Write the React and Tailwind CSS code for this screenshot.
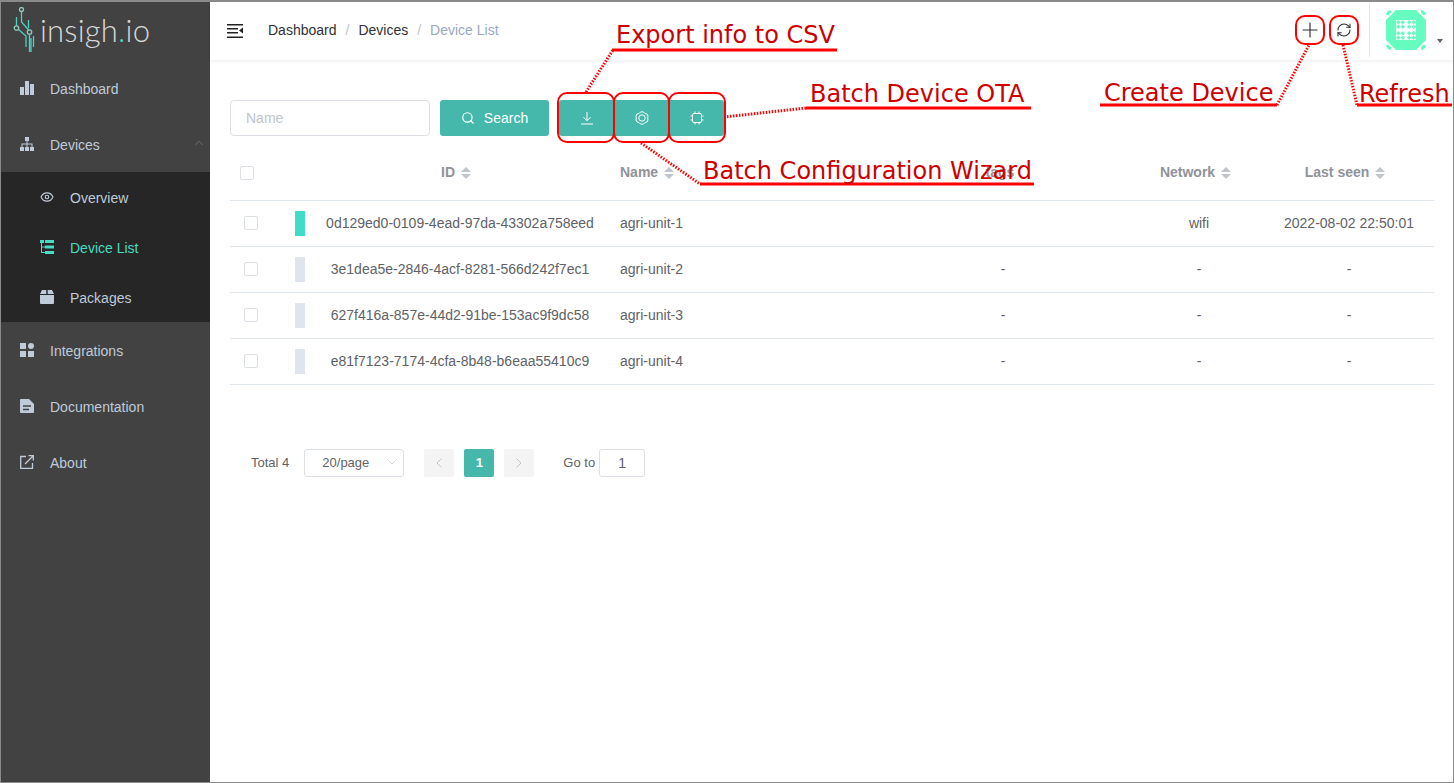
import { Search, Plus, RefreshCw, ChevronUp, ChevronDown, ChevronLeft, ChevronRight, Eye } from 'lucide-react';

const rows = [
  { id: '0d129ed0-0109-4ead-97da-43302a758eed', name: 'agri-unit-1', tags: '', network: 'wifi', seen: '2022-08-02 22:50:01', on: true },
  { id: '3e1dea5e-2846-4acf-8281-566d242f7ec1', name: 'agri-unit-2', tags: '-', network: '-', seen: '-' },
  { id: '627f416a-857e-44d2-91be-153ac9f9dc58', name: 'agri-unit-3', tags: '-', network: '-', seen: '-' },
  { id: 'e81f7123-7174-4cfa-8b48-b6eaa55410c9', name: 'agri-unit-4', tags: '-', network: '-', seen: '-' },
];

const gridCols = 'grid grid-cols-[50px_40px_280px_272px_262px_130px_170px] items-center';

const Bars = () => (
  <svg width="14" height="14" viewBox="0 0 14 14" fill="currentColor"><rect x="0" y="6" width="4" height="8" /><rect x="5" y="0" width="4" height="14" /><rect x="10" y="3" width="4" height="11" /></svg>
);
const Tree = () => (
  <svg width="14" height="14" viewBox="0 0 14 14" fill="currentColor"><rect x="5" y="0" width="4" height="4" /><rect x="0" y="10" width="4" height="4" /><rect x="5" y="10" width="4" height="4" /><rect x="10" y="10" width="4" height="4" /><path d="M6.5 4h1v2.5h5V10h-1V7.5h-4V10h-1V7.5h-4V10h-1V6.5h5z" /></svg>
);
const Grid4 = () => (
  <svg width="14" height="14" viewBox="0 0 14 14" fill="currentColor"><rect x="0" y="0" width="6" height="6" /><circle cx="11" cy="3" r="3" /><rect x="0" y="8" width="6" height="6" /><rect x="8" y="8" width="6" height="6" /></svg>
);
const Doc = () => (
  <svg width="14" height="14" viewBox="0 0 14 14"><path fill="currentColor" d="M1 0h8l5 5v8a1 1 0 0 1-1 1H1a1 1 0 0 1-1-1V1a1 1 0 0 1 1-1z" /><path stroke="#424242" strokeWidth="1.4" d="M3 7h8M3 10.500h6" /></svg>
);
const ListTree = () => (
  <svg width="14" height="14" viewBox="0 0 14 14" fill="currentColor"><rect x="0" y="0" width="4" height="3" /><rect x="5" y="0" width="9" height="3" /><rect x="5" y="5.500" width="9" height="3" /><rect x="5" y="11" width="9" height="3" /><path d="M1 3h1v3.500h3v1H2v4.500h3v1H1z" /></svg>
);
const Box = () => (
  <svg width="14" height="14" viewBox="0 0 14 14" fill="currentColor"><path d="M2 0H6.300v4H0zM7.700 0H12L14 4H7.700zM0 5h14V13a1 1 0 0 1-1 1H1a1 1 0 0 1-1-1z" /></svg>
);
const AboutIcon = () => (
  <svg width="14" height="14" viewBox="0 0 14 14" fill="none" stroke="currentColor" strokeWidth="1.300"><path d="M6 1.500H.7v11.800h11.800V8" /><path d="M5 9L13 1M8.500.7h4.800v4.800" /></svg>
);

const DownloadIcon = () => (
  <svg width="14" height="14" viewBox="0 0 14 14" fill="none" stroke="currentColor" strokeWidth="1"><path d="M7 1v8.500M3.500 6.200L7 9.700l3.500-3.500M1 13h12" /></svg>
);
const GearIcon = () => (
  <svg width="14" height="14" viewBox="0 0 14 14" fill="none" stroke="currentColor" strokeWidth="1">
    <path d="M5.500 1 7 .8 8.500 1 10 2.500l2 .5 1 2-.3 2 .3 2-1 2-2 .5L8.500 13 7 13.200 5.500 13 4 11.500l-2-.5-1-2 .3-2-.3-2 1-2 2-.5z" />
    <circle cx="7" cy="7" r="3.200" />
  </svg>
);
const ChipIcon = () => (
  <svg width="14" height="14" viewBox="0 0 14 14" fill="none" stroke="currentColor" strokeWidth="1">
    <rect x="2.500" y="2.500" width="9" height="9" rx="1.500" />
    <path d="M5 .5v2M9 .5v2M5 11.500v2M9 11.500v2M.5 5h2M.5 9h2M11.500 5h2M11.500 9h2" />
  </svg>
);

const Logo = () => (
  <svg width="26" height="48" viewBox="0 0 26 48" fill="none" stroke="#4fd1bd" strokeWidth="1.300">
    <path d="M8.500 4v11l8 9v21M3.500 10v9M5 22l8 7v11M15.500 13v8M20.500 29v11M18 31v14" />
    <circle cx="8.500" cy="2.500" r="2" stroke="#8ec9bd" />
    <circle cx="3.500" cy="21" r="2.200" stroke="#8ec9bd" fill="#424242" />
    <circle cx="16.500" cy="25" r="2.200" stroke="#8ec9bd" fill="#424242" />
  </svg>
);

const Avatar = () => (
  <svg width="40" height="40" viewBox="0 0 40 40">
    <path fill="#66fcc0" d="M10 0H30L40 10V30L30 40H10L0 30V10z" />
    <path fill="none" stroke="#66fcc0" strokeWidth="3" d="M1.500 5Q2 2 5 1.500M35 1.500Q38 2 38.500 5M1.500 35Q2 38 5 38.500M35 38.500Q38 38 38.500 35" />
    <rect x="10" y="10" width="20" height="20" fill="#fff" />
    <g fill="#66fcc0">
      {[12.300, 16.800, 23.200, 27.700].flatMap((x) => [12.300, 16.800, 23.200, 27.700].map((y) => <path key={`${x}-${y}`} d={`M${x - 2.300} ${y}L${x} ${y - 2.300}L${x + 2.300} ${y}L${x} ${y + 2.300}z`} />))}
    </g>
  </svg>
);

const SortCaret = () => (
  <span className="inline-flex flex-col gap-[2px] ml-[6px] align-middle">
    <span className="w-0 h-0 border-x-[5px] border-x-transparent border-b-[5px] border-b-[#c0c4cc]" />
    <span className="w-0 h-0 border-x-[5px] border-x-transparent border-t-[5px] border-t-[#c0c4cc]" />
  </span>
);

const Checkbox = () => <span className="block w-[14px] h-[14px] border border-[#dcdfe6] rounded-[2px] bg-white" />;

const NavItem = ({ icon, label, right }) => (
  <div className="h-[56px] flex items-center pl-[19px] text-[#bfcbd9] text-sm relative">
    <span className="w-[14px] mr-[17px] flex justify-center">{icon}</span>
    <span className="-ml-px pt-[2px]">{label}</span>
    {right}
  </div>
);

const SubItem = ({ icon, label, active }) => (
  <div className={`h-[50px] flex items-center pl-[39px] text-sm ${active ? 'text-[#49dbc3]' : 'text-[#bfcbd9]'}`}>
    <span className="w-[14px] mr-[16px] flex justify-center">{icon}</span>
    <span className="pt-[2px]">{label}</span>
  </div>
);

const Sidebar = () => (
  <aside className="w-[209px] shrink-0 bg-[#424242] flex flex-col">
    <div className="h-[58px] flex items-center pl-[12px]">
      <Logo />
      <span className="ml-[1px] mb-[2px] text-[31px] font-light tracking-[0.2px] text-[#d8d8d8] font-['Lato',sans-serif] leading-none">insigh<span className="text-[#4fd1bd]">.</span>io</span>
    </div>
    <NavItem icon={<Bars />} label="Dashboard" />
    <NavItem icon={<Tree />} label="Devices" right={<ChevronUp size={14} strokeWidth={1} className="absolute right-[4px] top-[20px] text-[#8a8f98]" />} />
    <div className="bg-[#262626]">
      <SubItem icon={<Eye size={14} />} label="Overview" />
      <SubItem icon={<ListTree />} label="Device List" active />
      <SubItem icon={<Box />} label="Packages" />
    </div>
    <NavItem icon={<Grid4 />} label="Integrations" />
    <NavItem icon={<Doc />} label="Documentation" />
    <NavItem icon={<AboutIcon />} label="About" />
  </aside>
);

const Header = () => (
  <header className="h-[58px] pb-[2px] flex items-center shadow-[0_1px_4px_rgba(0,21,41,0.08)] relative">
    <svg className="ml-[17px] text-[#222] mt-[1px]" width="17" height="14" viewBox="0 0 17 14" fill="currentColor">
      <path d="M0 0h16v1.500H0zM0 4h11v1.500H0zM0 8h11v1.500H0zM0 12.500h16V14H0z" />
      <path d="M16 3.500v6l-4-3z" />
    </svg>
    <nav className="ml-[24px] text-sm flex items-center">
      <span className="text-[#303133]">Dashboard</span>
      <span className="mx-[9px] text-[#c0c4cc]">/</span>
      <span className="text-[#303133]">Devices</span>
      <span className="mx-[9px] text-[#c0c4cc]">/</span>
      <span className="text-[#97a8be]">Device List</span>
    </nav>
    <div className="ml-auto flex items-center h-full -mb-[2px] pb-[2px]">
      <Plus size={24} strokeWidth={1.200} className="text-[#303133] mr-[14px]" />
      <RefreshCw size={16} strokeWidth={1.600} className="text-[#303133] mr-[17px]" />
      <div className="h-full border-l border-[#e6e6e6] pl-[16px] pr-[10px] flex items-center relative">
        <Avatar />
        <span className="ml-[11px] mt-[22px] w-0 h-0 border-x-[3.500px] border-x-transparent border-t-[4px] border-t-[#606266]" />
      </div>
    </div>
  </header>
);

const Toolbar = () => (
  <div className="flex items-center">
    <div className="w-[200px] h-[36px] border border-[#dcdfe6] rounded-[4px] px-[15px] flex items-center text-sm text-[#c0c4cc]">Name</div>
    <button className="ml-[10px] w-[109px] h-[36px] bg-[#46b8ab] rounded-[3px] text-white text-sm flex items-center justify-center">
      <Search size={14} className="mr-[9px]" />Search
    </button>
    <div className="ml-[10px] flex h-[36px] bg-[#46b8ab] rounded-[3px] text-white">
      <span className="w-[55px] flex items-center justify-center"><DownloadIcon /></span>
      <span className="w-[55px] flex items-center justify-center"><GearIcon /></span>
      <span className="w-[55px] flex items-center justify-center"><ChipIcon /></span>
    </div>
  </div>
);

const DeviceTable = () => (
  <div className="mt-[14px] text-sm text-[#606266]">
    <div className={`${gridCols} h-[51px] border-b border-[#dfe6ec] font-bold text-[#909399]`}>
      <span className="pl-[10px] pb-[5px]"><Checkbox /></span>
      <span />
      <span className="text-center pr-[8px] pb-[7px]">ID<SortCaret /></span>
      <span className="pl-[20px] pb-[7px]">Name<SortCaret /></span>
      <span className="text-center pr-[6px] pb-[7px]">tags</span>
      <span className="text-center pr-[7px] pb-[7px]">Network<SortCaret /></span>
      <span className="text-center pr-[8px] pb-[7px]">Last seen<SortCaret /></span>
    </div>
    {rows.map((r) => (
      <div key={r.id} className={`${gridCols} h-[46px] border-b border-[#dfe6ec]`}>
        <span className="pl-[14px] pb-[2px]"><Checkbox /></span>
        <span className={`ml-[15px] w-[10px] h-[25px] ${r.on ? 'bg-[#40dcc8]' : 'bg-[#dfe4ed]'}`} />
        <span className="text-center pb-[2px]">{r.id}</span>
        <span className="pl-[20px] pb-[2px]">{r.name}</span>
        <span className="text-center pb-[2px]">{r.tags}</span>
        <span className="text-center pb-[2px]">{r.network}</span>
        <span className="text-center pb-[2px]">{r.seen}</span>
      </div>
    ))}
  </div>
);

const Pager = () => (
  <div className="mt-[64px] ml-[21px] flex items-center text-[13px] text-[#606266]">
    <span>Total 4</span>
    <div className="ml-[15px] w-[100px] h-[28px] border border-[#dcdfe6] rounded-[3px] flex items-center pl-[17px] relative">
      20/page
      <ChevronDown size={16} strokeWidth={1} className="absolute right-[3px] top-[4px] text-[#c0c4cc]" />
    </div>
    <span className="ml-[20px] w-[30px] h-[28px] bg-[#f4f4f5] rounded-[2px] flex items-center justify-center text-[#c0c4cc]"><ChevronLeft size={16} strokeWidth={1.500} /></span>
    <span className="ml-[10px] w-[30px] h-[28px] bg-[#46b8ab] rounded-[2px] flex items-center justify-center text-white font-bold">1</span>
    <span className="ml-[10px] w-[30px] h-[28px] bg-[#f4f4f5] rounded-[2px] flex items-center justify-center text-[#c0c4cc]"><ChevronRight size={16} strokeWidth={1.500} /></span>
    <span className="ml-[29px]">Go to</span>
    <span className="ml-[4px] w-[46px] h-[28px] border border-[#dcdfe6] rounded-[3px] flex items-center justify-center text-sm">1</span>
  </div>
);

// red callouts drawn on top of the screenshot
const Note = ({ className, children }) => (
  <span className={`absolute font-['DejaVu_Sans',sans-serif] text-[24px] leading-none text-[#cc0000] whitespace-nowrap ${className}`}>{children}</span>
);
const Ring = ({ className }) => <span className={`absolute border-2 border-[#ff0000] rounded-[10px] ${className}`} />;

const Annotations = () => (
  <>
    <svg className="absolute inset-0 pointer-events-none" width="1454" height="783" fill="none" stroke="#ff0000">
      <g strokeWidth="3">
        <path d="M612 50H837M806 108H1031M700 184H1034M1100 105H1277M1357 105H1452" />
      </g>
      <g strokeWidth="3" strokeDasharray="1.500 1.500">
        <path d="M586 92L613 50M724 117L806 108M641 143L700 184M1277 105L1309 45M1343 45L1357 105" />
      </g>
    </svg>
    <Ring className="left-[557px] top-[92px] w-[58px] h-[51px]" />
    <Ring className="left-[613px] top-[92px] w-[57px] h-[51px]" />
    <Ring className="left-[668px] top-[92px] w-[58px] h-[51px]" />
    <Ring className="left-[1295px] top-[15px] w-[30px] h-[30px]" />
    <Ring className="left-[1329px] top-[15px] w-[30px] h-[30px]" />
    <Note className="left-[616px] top-[23px]">Export info to CSV</Note>
    <Note className="left-[810px] top-[82px]">Batch Device OTA</Note>
    <Note className="left-[703px] top-[159px]">Batch Configuration Wizard</Note>
    <Note className="left-[1104px] top-[81px]">Create Device</Note>
    <Note className="left-[1359px] top-[82px]">Refresh</Note>
  </>
);

export default function App() {
  return (
    <div className="relative w-[1454px] h-[783px] overflow-hidden bg-white border-l border-t-2 border-r border-b border-[#8a8a8a] flex font-['Liberation_Sans',Arial,sans-serif]">
      <Sidebar />
      <main className="flex-1 min-w-0 flex flex-col">
        <Header />
        <div className="pl-[20px] pr-[19px] pt-[40px]">
          <Toolbar />
          <DeviceTable />
          <Pager />
        </div>
      </main>
      <div className="absolute -left-px -top-[2px] w-[1454px] h-[783px] pointer-events-none">
        <Annotations />
      </div>
    </div>
  );
}
